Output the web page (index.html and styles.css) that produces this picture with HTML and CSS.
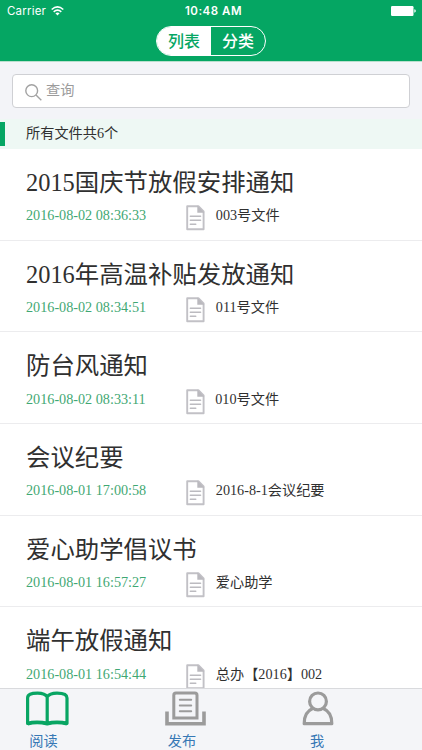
FILE: index.html
```
<!DOCTYPE html>
<html lang="zh-CN">
<head>
<meta charset="utf-8">
<title>文件列表</title>
<link rel="stylesheet" href="styles.css">
</head>
<body>
<svg class="defs" width="0" height="0" aria-hidden="true">
  <symbol id="doc" viewBox="0 0 19 26">
    <path d="M1.2 1.2H12.4L17.6 6.4V24.2H1.2Z" fill="#fff" stroke="#c2c1c6" stroke-width="1.9" stroke-linejoin="round"/>
    <path d="M11.3.6L18.4 7.8H11.3Z" fill="#bab9be"/>
    <path d="M4.3 11.2H14.6M4.3 15.2H14.6M4.3 19.2H9.8" fill="none" stroke="#bcbbc0" stroke-width="1.4" stroke-linecap="round"/>
  </symbol>
</svg>
<div class="app">
  <header class="header">
    <div class="status">
      <div class="carrier"><span>Carrier</span>
        <svg width="13" height="10" viewBox="0 0 13 10" fill="none" stroke="#fff" stroke-width="1.6"><path d="M.7 3.5Q6.5-1.6 12.3 3.5M2.7 5.8Q6.5 2.4 10.3 5.8"/><path d="M6.5 9.4L4.4 7.3Q6.5 5.6 8.6 7.3Z" fill="#fff" stroke="none"/></svg>
      </div>
      <div class="clock">10:48 AM</div>
      <div class="power"><svg width="25" height="10" viewBox="0 0 25 10" fill="#fff"><rect width="22.5" height="10" rx="1.2"/><path d="M23.3 3.3Q24.8 3.6 24.8 5T23.3 6.7Z"/></svg></div>
    </div>
    <nav class="segments"><span class="segment active">列表</span><span class="segment">分类</span></nav>
  </header>
  <div class="search">
    <div class="field">
      <svg width="17" height="17" viewBox="0 0 17 17" fill="none" stroke="#a2a2a2" stroke-width="1.4"><circle cx="6.7" cy="6.7" r="5.9"/><path d="M11 11L16.3 16.3"/></svg>
      <span>查询</span>
    </div>
  </div>
  <div class="summary"><span>所有文件共6个</span></div>
  <main class="list">
    <article class="row"><h2>2015国庆节放假安排通知</h2><div class="meta"><time>2016-08-02 08:36:33</time><svg class="doc"><use href="#doc"/></svg><span>003号文件</span></div></article>
    <article class="row"><h2>2016年高温补贴发放通知</h2><div class="meta"><time>2016-08-02 08:34:51</time><svg class="doc"><use href="#doc"/></svg><span>011号文件</span></div></article>
    <article class="row"><h2>防台风通知</h2><div class="meta"><time>2016-08-02 08:33:11</time><svg class="doc"><use href="#doc"/></svg><span>010号文件</span></div></article>
    <article class="row"><h2>会议纪要</h2><div class="meta"><time>2016-08-01 17:00:58</time><svg class="doc"><use href="#doc"/></svg><span>2016-8-1会议纪要</span></div></article>
    <article class="row"><h2>爱心助学倡议书</h2><div class="meta"><time>2016-08-01 16:57:27</time><svg class="doc"><use href="#doc"/></svg><span>爱心助学</span></div></article>
    <article class="row"><h2>端午放假通知</h2><div class="meta"><time>2016-08-01 16:54:44</time><svg class="doc"><use href="#doc"/></svg><span>总办【2016】002</span></div></article>
  </main>
  <footer class="tabs">
    <div class="tab read">
      <svg width="44" height="35" viewBox="0 0 44 35" fill="none" stroke="#08a563" stroke-width="3.2" stroke-linejoin="round"><path d="M22.2 6Q20 2.2 12.5 2.2C6 2.2 2.6 3.2 2.6 7V32.4Q6 31.2 12 31.2T22.2 32.4Q26 31.2 32 31.2T42 32.4V7C42 3.2 38.4 2.2 32 2.2Q24.5 2.2 22.2 6V32"/><path d="M2.6 32.9Q12 30.4 22.2 32.9Q32 30.4 42 32.9"/></svg>
      <span>阅读</span>
    </div>
    <div class="tab publish">
      <svg width="41" height="35" viewBox="0 0 41 35" fill="none" stroke="#9b9b9b" stroke-width="3"><path d="M8.8 27V4.2Q8.8 2 11 2H29.8Q32 2 32 4.2V27Z"/><path d="M14.8 8.7H26.2M14.8 14.5H26.2M14.8 20.2H26.2" stroke-width="2" stroke-linecap="round"/><path d="M2 20.5V32.7H39V20.5" stroke-width="3.6"/></svg>
      <span>发布</span>
    </div>
    <div class="tab me">
      <svg width="32" height="35" viewBox="0 0 32 35" fill="none" stroke="#9b9b9b" stroke-width="3.2"><circle cx="16" cy="10.4" r="8.4"/><path d="M10.7 17.6C5.2 19.8 2.2 25 2.2 32.7H29.8C29.8 25 26.8 19.8 21.3 17.6" stroke-linejoin="round"/></svg>
      <span>我</span>
    </div>
  </footer>
</div>
</body>
</html>
```

FILE: styles.css
```
* { box-sizing: border-box; }
body {
  margin: 0;
  background: #fff;
  color: #303030;
  font: 14.2px/20px "Liberation Serif", "Noto Sans CJK SC", serif;
}
svg { display: block; flex: none; }
.defs { height: 0; }
.app { display: flex; flex-direction: column; height: 750px; overflow: hidden; }
.header {
  flex: none;
  height: 62px;
  background: #05a663;
  border-bottom: 1px solid #b9dfcd;
  color: #fff;
  font-family: Inter, "Noto Sans CJK SC", sans-serif;
}
.status {
  display: grid;
  grid-template-columns: 1fr auto 1fr;
  height: 22px;
  padding: 0 6px 0 7px;
  align-items: center;
  font-size: 11.5px;
}
.carrier { display: flex; align-items: center; gap: 5px; letter-spacing: .2px; }
.clock { margin-left: 4px; font-weight: 600; font-size: 11.5px; letter-spacing: .5px; }
.power { justify-self: end; }
.segments {
  display: flex;
  width: 110px;
  height: 30px;
  margin: 4px auto 0;
  border: 1px solid #fff;
  border-radius: 15px;
  overflow: hidden;
}
.segment {
  flex: 1;
  text-align: center;
  font-size: 16px;
  line-height: 28px;
  font-weight: 500;
}
.active { background: #fff; color: #05a663; }
.search { flex: none; height: 57px; padding: 12px 12px 0; background: #f3f4f8; }
.field {
  display: flex;
  align-items: center;
  gap: 5px;
  height: 34px;
  padding-left: 11px;
  border: 1px solid #cfd0d4;
  border-radius: 4px;
  background: #fff;
  color: #9b9b9b;
}
.field svg { margin: 2px 0 0 1px; }
.field span { margin: -2px 0 0 -1px; }
.summary {
  flex: none;
  display: flex;
  align-items: center;
  height: 30px;
  padding: 2px 0 3px;
  background: #eef8f4;
}
.summary::before { content: ""; width: 5px; height: 24px; background: #05a663; }
.summary span { margin: -2px 0 0 21px; }
.list { flex: 1; min-height: 0; overflow: hidden; }
.row {
  height: 91.7px;
  padding: 16px 26px 0;
  border-bottom: 1px solid #ececee;
}
.row h2 { margin: 0; font-size: 24.4px; line-height: 36px; font-weight: 400; }
.meta { display: flex; align-items: center; height: 28.6px; }
.meta time { color: #3fa873; }
.doc { width: 19px; height: 26px; margin: 6px 10.6px 0 40px; }
.tabs {
  flex: none;
  display: flex;
  height: 62px;
  border-top: 1px solid #d9dadd;
  background: #f4f5f8;
  color: #3778b5;
}
.tab { display: flex; flex-direction: column; align-items: center; padding-top: 2px; }
.tab span { margin-top: 5px; }
.read { margin-left: 25px; width: 44px; }
.read span { margin-left: -7px; }
.publish { margin-left: 96px; width: 41px; }
.publish span { margin-left: -7px; }
.me { margin-left: 96px; width: 32px; }
.me span { margin-left: -2px; }
```
